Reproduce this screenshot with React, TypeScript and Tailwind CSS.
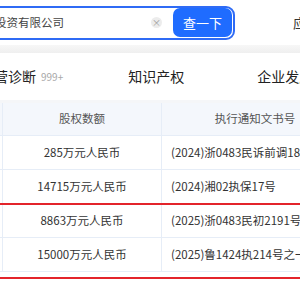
const rows = [
  { amount: "285万元人民币", doc: "(2024)浙0483民诉前调1844号" },
  { amount: "14715万元人民币", doc: "(2024)湘02执保17号" },
  { amount: "8863万元人民币", doc: "(2025)浙0483民初2191号" },
  { amount: "15000万元人民币", doc: "(2025)鲁1424执214号之一" },
]

export default function App() {
  return (
    <div className="relative w-[300px] h-[300px] overflow-hidden bg-white text-[#333] font-['Noto_Sans_CJK_SC','Noto_Sans',sans-serif]">
      {/* search bar */}
      <div className="flex items-center h-[45px] bg-white whitespace-nowrap">
        <div className="ml-[-23px] w-[258px] h-[34px] shrink-0 flex items-center border-2 border-[#2f6bf5] rounded-[9px] pr-[1px]">
          <span className="flex-1 pl-[16px] text-[11.5px] text-[#444] overflow-hidden">投资有限公司</span>
          <span className="w-[11px] h-[11px] rounded-full bg-[#ececec] text-[#9a9a9a] text-[9px] leading-[11px] text-center">×</span>
          <button className="ml-[11px] w-[59px] h-[29px] rounded-[7px] bg-[#1f6cff] text-white text-[13px]">查一下</button>
        </div>
        <span className="ml-[58px] text-[13px] text-[#333] shrink-0">应用</span>
      </div>
      <div className="h-[8px] bg-gradient-to-b from-[#f7f7f7] to-[#efefef]" />

      {/* tabs */}
      <div className="flex items-center h-[47px] whitespace-nowrap">
        <span className="ml-[-20px] text-[14px] text-[#222] shrink-0">经营诊断</span>
        <span className="ml-[5px] text-[10px] text-[#a8a8a8] shrink-0">999+</span>
        <span className="ml-[65px] text-[14px] text-[#222] shrink-0">知识产权</span>
        <span className="ml-[73px] text-[14px] text-[#222] shrink-0">企业发展</span>
      </div>
      <div className="h-[3px] bg-[#f5f6f8]" />

      {/* table */}
      <div className="ml-[-40px] w-[388px] text-[11.5px]">
        <div className="grid grid-cols-[43px_159px_186px] h-[33px] bg-[#f4f7fc] border-b border-[#e6edf7] text-[#555]">
          <div className="border-r border-[#e6edf7]" />
          <div className="flex items-center justify-center border-r border-[#e6edf7]">股权数额</div>
          <div className="flex items-center justify-center">执行通知文书号</div>
        </div>
        {rows.map((r) => (
          <div key={r.doc} className="grid grid-cols-[43px_159px_186px] h-[34px] border-b border-[#e6edf7] whitespace-nowrap">
            <div className="border-r border-[#e6edf7]" />
            <div className="flex items-center justify-center border-r border-[#e6edf7]">{r.amount}</div>
            <div className="flex items-center pl-[9px] overflow-hidden">{r.doc}</div>
          </div>
        ))}
      </div>

      {/* red highlight annotation */}
      <div className="absolute left-[-10px] right-[-4px] top-[203px] h-[76px] border-2 border-[#e3242b]" />
    </div>
  )
}
